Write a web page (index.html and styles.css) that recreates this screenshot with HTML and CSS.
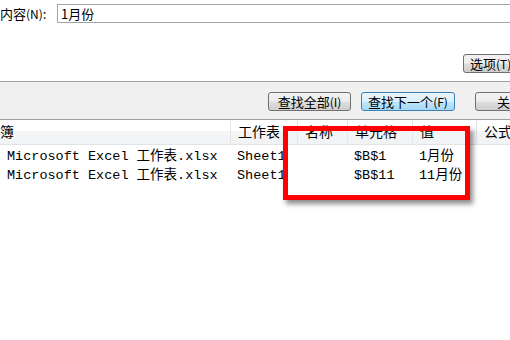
FILE: index.html
```html
<!DOCTYPE html>
<html lang="zh-CN">
<head>
    <meta charset="UTF-8">
    <title>查找和替换</title>
    <link rel="stylesheet" href="styles.css">
</head>
<body>
    <div class="dialog">
        <div class="find-panel">
            <div class="field-row">
                <label class="field-label">内容<span class="key">(N)</span>:</label>
                <div class="field-input">1月份</div>
            </div>
            <div class="options-row">
                <button class="btn btn-options">选项<span class="key">(T)</span> &gt;&gt;</button>
            </div>
        </div>

        <div class="action-bar">
            <button class="btn btn-all">查找全部<span class="key">(I)</span></button>
            <button class="btn btn-next">查找下一个<span class="key">(F)</span></button>
            <button class="btn btn-close">关闭</button>
        </div>

        <div class="results">
            <div class="row header">
                <div class="cell">簿</div>
                <div class="cell">工作表</div>
                <div class="cell">名称</div>
                <div class="cell">单元格</div>
                <div class="cell">值</div>
                <div class="cell">公式</div>
            </div>
            <div class="rows">
                <div class="row">
                    <div class="cell file">Microsoft Excel 工作表.xlsx</div>
                    <div class="cell">Sheet1</div>
                    <div class="cell"></div>
                    <div class="cell">$B$1</div>
                    <div class="cell">1月份</div>
                    <div class="cell"></div>
                </div>
                <div class="row">
                    <div class="cell file">Microsoft Excel 工作表.xlsx</div>
                    <div class="cell">Sheet1</div>
                    <div class="cell"></div>
                    <div class="cell">$B$11</div>
                    <div class="cell">11月份</div>
                    <div class="cell"></div>
                </div>
            </div>
        </div>

        <div class="highlight"></div>
    </div>
</body>
</html>
```

FILE: styles.css
```css
html, body {
    margin: 0;
    padding: 0;
    overflow: hidden;
    background-color: #fff;
}

body {
    font-family: "Noto Sans CJK SC", "Liberation Sans", sans-serif;
    font-size: 13px;
    color: #000;
}

.dialog {
    position: relative;
    width: 600px;
    height: 340px;
}

.key {
    font-size: 12px;
}

/* search field */

.find-panel {
    box-sizing: border-box;
    height: 82px;
    border-bottom: 1px solid #a0a0a0;
    background-color: #fff;
    padding-top: 4px;
}

.field-row {
    display: flex;
    align-items: center;
    height: 19px;
}

.field-label {
    width: 57px;
    line-height: 19px;
    white-space: nowrap;
}

.field-input {
    box-sizing: border-box;
    width: 540px;
    height: 19px;
    border: 1px solid #a5a5a5;
    padding-left: 3px;
    line-height: 17px;
}

.options-row {
    display: flex;
    padding-left: 463px;
    margin-top: 31px;
}

/* buttons */

.btn {
    box-sizing: border-box;
    height: 19px;
    padding: 0 6px;
    border: 1px solid #707070;
    border-radius: 3px;
    background: linear-gradient(#f3f3f3 0%, #ebebeb 50%, #dddddd 51%, #cfcfcf 100%);
    font-family: inherit;
    font-size: 13px;
    line-height: 17px;
    color: #000;
    white-space: nowrap;
}

.btn-options {
    width: 76px;
    text-align: left;
}

.action-bar {
    box-sizing: border-box;
    display: flex;
    height: 38px;
    padding: 10px 0 0 268px;
    background-color: #f0f0f0;
    border-bottom: 1px solid #a0a0a0;
}

.btn-all {
    width: 83px;
}

.btn-next {
    width: 94px;
    margin-left: 10px;
    border-color: #3c7fb1;
    background: linear-gradient(#eaf6fd 0%, #d9f0fc 50%, #bee6fd 51%, #a7d9f5 100%);
}

.btn-close {
    width: 83px;
    margin-left: 20px;
    text-align: left;
    padding-left: 21px;
}

/* result list */

.row {
    display: grid;
    grid-template-columns: 230px 67px 50px 65px 64px 1fr;
    height: 19px;
    line-height: 19px;
}

.row.header {
    height: 24px;
    line-height: 23px;
    font-size: 14px;
    background: linear-gradient(#ffffff 0%, #ffffff 45%, #f4f5f7 46%, #f1f2f4 100%);
    border-bottom: 1px solid #e2e3e5;
}

.header .cell {
    padding-left: 7px;
    border-left: 1px solid #e3e5e8;
}

.header .cell:first-child {
    padding-left: 0;
    border-left: none;
}

.rows {
    padding-top: 2px;
    font-family: "Liberation Mono", "Noto Sans CJK SC", monospace;
    font-size: 13.5px;
}

.rows .cell {
    padding-left: 7px;
    white-space: nowrap;
}

/* annotation box */

.highlight {
    position: absolute;
    left: 283px;
    top: 126px;
    width: 177px;
    height: 64px;
    border: 5px solid #ff0000;
    box-shadow: 3px 4px 5px rgba(0, 0, 0, 0.45);
}
```
